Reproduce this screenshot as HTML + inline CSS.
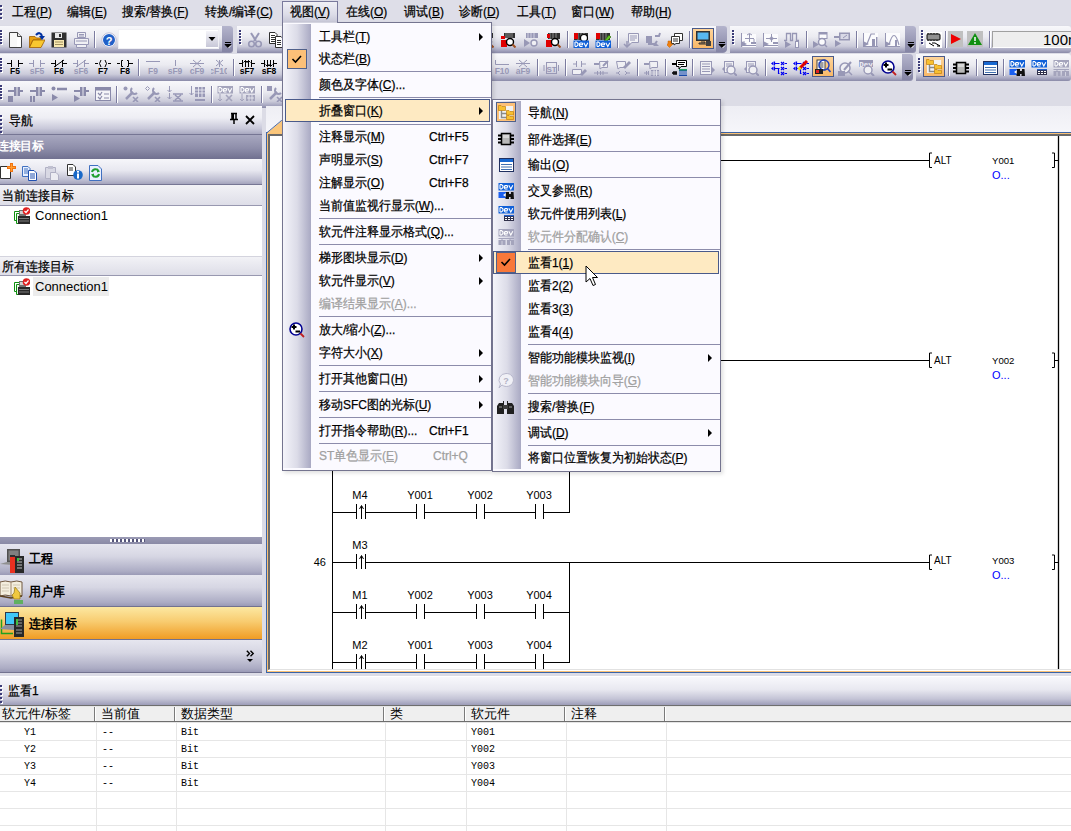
<!DOCTYPE html>
<html><head><meta charset="utf-8">
<style>
*{margin:0;padding:0;box-sizing:border-box}
html,body{width:1071px;height:831px;overflow:hidden;background:#dcdce6;font-family:"Liberation Sans",sans-serif;font-size:12px;color:#000}
.a{position:absolute}
#menubar{left:0;top:0;width:1071px;height:25px;background:#dedee8}
#menubar span{position:absolute;top:3px;font-size:13px;white-space:nowrap;transform:scaleX(0.92);transform-origin:0 0}
.tb{position:absolute;height:27px;background:linear-gradient(#f8f8fb 0%,#ebebf1 40%,#cbcbda 75%,#a6a6c0 90%,#8a8aa8 100%);border-radius:0 3px 3px 0}
#nav{left:0;top:106px;width:262px;height:567px;background:#fff}
#editor{left:266px;top:106px;width:805px;height:567px}
#watch{left:0;top:676px;width:1071px;height:155px;background:#fff}
#menu{left:282px;top:22px;width:210px;height:449px;background:#fbfaff;border:1px solid #74748f;box-shadow:2px 2px 4px rgba(0,0,0,.13)}
#sub{left:492px;top:99px;width:229px;height:373px;background:#fbfaff;border:1px solid #74748f;box-shadow:2px 2px 4px rgba(0,0,0,.13)}
.strip{position:absolute;left:0;top:0;bottom:0;width:28px;background:linear-gradient(90deg,#f4f4fa 0%,#dcdce8 50%,#a9a9c3 100%)}
.mi{position:absolute;height:22px;line-height:22px;font-size:13px;white-space:nowrap;transform:scaleX(0.92);transform-origin:0 0}
.sep{position:absolute;left:36px;right:0;height:1px;background:#8c8cab}
.dis{color:#a0a0a0}
.sc{position:absolute;white-space:nowrap}
.arr{position:absolute;width:0;height:0;border-top:4px solid transparent;border-bottom:4px solid transparent;border-left:4px solid #000}
.btn{left:0;width:262px;height:32px;background:linear-gradient(#e6e6ef 0%,#d6d6e3 40%,#acacc4 88%,#9a9ab6 100%);border-bottom:1px solid #72728f}
.sel{background:linear-gradient(#fce8a2 0%,#f8cc70 45%,#f09c24 100%)}
.bt{font-size:13px;font-weight:bold;transform:scaleX(0.92);transform-origin:0 0}
.mono{font-family:"Liberation Mono",monospace;font-size:10px;line-height:13px;white-space:nowrap}
.mi,#menubar span,.tx{-webkit-text-stroke:0.25px currentColor}
.tx{transform:scaleX(0.92);transform-origin:0 0}
</style></head>
<body>
<div id="menubar" class="a"><div class="a" style="left:0px;top:5px;width:2px;height:2px;background:#3c3c78;box-shadow:1px 1px 0 #fff"></div><div class="a" style="left:0px;top:9px;width:2px;height:2px;background:#3c3c78;box-shadow:1px 1px 0 #fff"></div><div class="a" style="left:0px;top:13px;width:2px;height:2px;background:#3c3c78;box-shadow:1px 1px 0 #fff"></div><div class="a" style="left:0px;top:17px;width:2px;height:2px;background:#3c3c78;box-shadow:1px 1px 0 #fff"></div>
  <span style="left:12px">工程(<u>P</u>)</span>
  <span style="left:67px">编辑(<u>E</u>)</span>
  <span style="left:122px">搜索/替换(<u>F</u>)</span>
  <span style="left:205px">转换/编译(<u>C</u>)</span>
  <div class="a" style="left:282px;top:1px;width:56px;height:22px;background:linear-gradient(#f0f0f5 0%,#dcdce8 60%,#c6c6d6 100%);border:1px solid #7a7a9c;border-bottom:none"></div><span style="left:290px">视图(<u>V</u>)</span>
  <span style="left:346px">在线(<u>O</u>)</span>
  <span style="left:404px">调试(<u>B</u>)</span>
  <span style="left:459px">诊断(<u>D</u>)</span>
  <span style="left:517px">工具(<u>T</u>)</span>
  <span style="left:571px">窗口(<u>W</u>)</span>
  <span style="left:631px">帮助(<u>H</u>)</span>
</div>
<!-- toolbars -->
<div class="tb" style="left:0px;top:26px;width:233px"></div><div class="a" style="left:222px;top:26px;width:11px;height:26px;background:linear-gradient(#b4b4cc,#8484a4);border-radius:0 3px 3px 0"></div><svg class="a" style="left:224px;top:41px" width="8" height="8" viewBox="0 0 8 8"><path d="M1 1.5H7M1 3.5H7L4 6.5Z" stroke="#000" stroke-width="1" fill="#000"/><path d="M4.5 7L7 4.5" stroke="#fff"/></svg><div class="a" style="left:0px;top:30px;width:2px;height:2px;background:#3c3c78;box-shadow:1px 1px 0 #fff"></div><div class="a" style="left:0px;top:33px;width:2px;height:2px;background:#3c3c78;box-shadow:1px 1px 0 #fff"></div><div class="a" style="left:0px;top:36px;width:2px;height:2px;background:#3c3c78;box-shadow:1px 1px 0 #fff"></div><div class="a" style="left:0px;top:39px;width:2px;height:2px;background:#3c3c78;box-shadow:1px 1px 0 #fff"></div><div class="a" style="left:0px;top:42px;width:2px;height:2px;background:#3c3c78;box-shadow:1px 1px 0 #fff"></div><svg class="a" style="left:8px;top:32px" width="16" height="16" viewBox="0 0 16 16"><path d="M1.5 0.5H9.5L13.5 4.5V15.5H1.5Z" fill="#fff" stroke="#404040"/><path d="M9.5 0.5V4.5H13.5" fill="#e8e8e8" stroke="#404040"/><rect x="2" y="1" width="7" height="14" fill="#f8f8f8"/></svg><svg class="a" style="left:29px;top:32px" width="16" height="16" viewBox="0 0 16 16"><path d="M0.5 4.5H6L7.5 6H12V8H4L0.5 15.5Z" fill="#e8a010" stroke="#a06000" stroke-width="0.8"/><path d="M0.5 15.5L4 8H16L12 15.5Z" fill="#f8c830" stroke="#a06000" stroke-width="0.8"/><path d="M7 3Q11 -1 13 4" stroke="#0030a0" stroke-width="2.2" fill="none"/><path d="M10 4H16L13 8Z" fill="#0030a0"/></svg><svg class="a" style="left:51px;top:32px" width="16" height="16" viewBox="0 0 16 16"><rect x="0.5" y="0.5" width="15" height="15" fill="#303030"/><rect x="4" y="1" width="7" height="5" fill="#e8e8e8"/><rect x="8" y="2" width="2" height="3" fill="#303030"/><rect x="3" y="8" width="10" height="7" fill="#f8e8b0"/><path d="M4 10H12M4 12.5H12" stroke="#a09060"/></svg><svg class="a" style="left:73px;top:32px" width="16" height="16" viewBox="0 0 16 16"><path d="M4.5 0.5H12.5V5.5H4.5Z" fill="#f0f0f4" stroke="#9898b6"/><path d="M1.5 6.5H15.5V12.5H1.5Z" fill="#f0f0f4" stroke="#9898b6"/><path d="M3.5 12.5H13.5V15.5H3.5Z" fill="#f0f0f4" stroke="#9898b6"/><path d="M6 2.5H11M6 4H11M3 9H14" stroke="#9898b6"/></svg><div class="a" style="left:94px;top:31px;width:1px;height:17px;background:#7c7ca0;box-shadow:1px 0 0 #fff"></div><svg class="a" style="left:101px;top:32px" width="16" height="16" viewBox="0 0 16 16"><circle cx="8" cy="8" r="7.2" fill="#fff" stroke="#c0c0d8"/><circle cx="8" cy="8" r="6" fill="#2060c8"/><text x="8" y="12.5" font-size="11" font-weight="bold" text-anchor="middle" fill="#fff" font-family="Liberation Sans,sans-serif">?</text></svg><div class="a" style="left:118px;top:29px;width:101px;height:20px;background:#fff;border:1px solid #f0f0f4"></div><div class="a" style="left:206px;top:31px;width:12px;height:16px;background:linear-gradient(#f4f4f8,#c8c8d8)"></div><svg class="a" style="left:208px;top:35px" width="8" height="8" viewBox="0 0 8 8"><path d="M0.5 2H7.5L4 6Z" fill="#000"/></svg><div class="tb" style="left:237px;top:26px;width:489px"></div><div class="a" style="left:716px;top:26px;width:11px;height:26px;background:linear-gradient(#b4b4cc,#8484a4);border-radius:0 3px 3px 0"></div><svg class="a" style="left:718px;top:41px" width="8" height="8" viewBox="0 0 8 8"><path d="M1 1.5H7M1 3.5H7L4 6.5Z" stroke="#000" stroke-width="1" fill="#000"/><path d="M4.5 7L7 4.5" stroke="#fff"/></svg><div class="a" style="left:239px;top:30px;width:2px;height:2px;background:#3c3c78;box-shadow:1px 1px 0 #fff"></div><div class="a" style="left:239px;top:33px;width:2px;height:2px;background:#3c3c78;box-shadow:1px 1px 0 #fff"></div><div class="a" style="left:239px;top:36px;width:2px;height:2px;background:#3c3c78;box-shadow:1px 1px 0 #fff"></div><div class="a" style="left:239px;top:39px;width:2px;height:2px;background:#3c3c78;box-shadow:1px 1px 0 #fff"></div><div class="a" style="left:239px;top:42px;width:2px;height:2px;background:#3c3c78;box-shadow:1px 1px 0 #fff"></div><svg class="a" style="left:247px;top:32px" width="16" height="16" viewBox="0 0 16 16"><path d="M4 1L9 9M12 1L7 9" stroke="#9898b6" stroke-width="2"/><circle cx="4.5" cy="12" r="2.8" fill="none" stroke="#9898b6" stroke-width="1.6"/><circle cx="11.5" cy="12" r="2.8" fill="none" stroke="#9898b6" stroke-width="1.6"/></svg><svg class="a" style="left:269px;top:32px" width="16" height="16" viewBox="0 0 16 16"><path d="M0.5 0.5H6L8 2.5V11.5H0.5Z" fill="#fff" stroke="#303030"/><path d="M2 3.5H6M2 5.5H6M2 7.5H6M2 9.5H6" stroke="#303030"/><path d="M6.5 4.5H12L14 6.5V15.5H6.5Z" fill="#fff" stroke="#303030"/><path d="M8 8.5H12M8 10.5H12M8 12.5H12" stroke="#303030"/></svg><svg class="a" style="left:478px;top:32px" width="16" height="16" viewBox="0 0 16 16"><rect x="4" y="1" width="11" height="5" fill="#303030"/><path d="M6 1V6M8 1V6M10 1V6M12 1V6" stroke="#888"/><rect x="1" y="4" width="4" height="3" fill="#e00000"/><rect x="1" y="8" width="6" height="7" fill="#e00000"/><circle cx="10" cy="10" r="3.5" fill="#fff" stroke="#000" stroke-width="1.4"/><path d="M12.5 12.5L15.5 15.5" stroke="#a05020" stroke-width="2"/></svg><svg class="a" style="left:500px;top:32px" width="16" height="16" viewBox="0 0 16 16"><rect x="4" y="1" width="11" height="5" fill="#303030"/><path d="M6 1V6M8 1V6M10 1V6M12 1V6" stroke="#888"/><rect x="1" y="4" width="4" height="3" fill="#e00000"/><rect x="1" y="8" width="6" height="7" fill="#e00000"/><circle cx="10" cy="10" r="3.5" fill="#fff" stroke="#000" stroke-width="1.4"/><path d="M12.5 12.5L15.5 15.5" stroke="#a05020" stroke-width="2"/></svg><svg class="a" style="left:523px;top:32px" width="16" height="16" viewBox="0 0 16 16"><rect x="3" y="1" width="12" height="5" fill="#9898b6"/><path d="M5 1V6M8 1V6M11 1V6" stroke="#d0d0e0"/><path d="M1 7L7 11L1 15Z" fill="#9898b6"/><circle cx="11" cy="11" r="3" fill="#f0f0f4" stroke="#9898b6" stroke-width="1.4"/></svg><svg class="a" style="left:545px;top:32px" width="16" height="16" viewBox="0 0 16 16"><rect x="3" y="1" width="12" height="6" fill="#303030"/><path d="M5 1V7M8 1V7M11 1V7" stroke="#888"/><rect x="2" y="2" width="3" height="4" fill="#e00000"/><rect x="1" y="8" width="6" height="7" fill="#e00000"/><circle cx="10" cy="10" r="3.5" fill="#fff" stroke="#000" stroke-width="1.4"/><path d="M12.5 12.5L15.5 15.5" stroke="#a05020" stroke-width="2"/></svg><div class="a" style="left:567px;top:31px;width:1px;height:17px;background:#7c7ca0;box-shadow:1px 0 0 #fff"></div><svg class="a" style="left:573px;top:32px" width="16" height="16" viewBox="0 0 16 16"><rect x="1" y="1" width="14" height="7" fill="#303030"/><path d="M5 1V8M8 1V8M11 1V8" stroke="#888"/><rect x="1" y="1" width="4" height="6" fill="#e00000"/><circle cx="11" cy="6" r="3.5" fill="#fff" stroke="#000" stroke-width="1.2"/><rect x="0.5" y="8.5" width="15.5" height="7.5" fill="#1060d8"/><g transform="translate(0,8.5)"><path d="M2 1.5V6M2 1.5H3.5L5 3V4.5L3.5 6H2M6.5 4.2H9.5V3.2L9 2.5H7.2L6.5 3.2V5.3L7.2 6H9.5M10.8 2.3L12.8 6L14.8 2.3" stroke="#fff" stroke-width="1.1" fill="none"/></g></svg><svg class="a" style="left:595px;top:32px" width="16" height="16" viewBox="0 0 16 16"><rect x="1" y="1" width="14" height="7" fill="#303030"/><path d="M5 1V8M8 1V8M11 1V8" stroke="#888"/><rect x="1" y="1" width="4" height="6" fill="#e00000"/><path d="M9 9L14 3L16 5L11 10Z" fill="#60c020" stroke="#206000" stroke-width="0.6"/><rect x="0.5" y="8.5" width="15.5" height="7.5" fill="#1060d8"/><g transform="translate(0,8.5)"><path d="M2 1.5V6M2 1.5H3.5L5 3V4.5L3.5 6H2M6.5 4.2H9.5V3.2L9 2.5H7.2L6.5 3.2V5.3L7.2 6H9.5M10.8 2.3L12.8 6L14.8 2.3" stroke="#fff" stroke-width="1.1" fill="none"/></g></svg><div class="a" style="left:617px;top:31px;width:1px;height:17px;background:#7c7ca0;box-shadow:1px 0 0 #fff"></div><svg class="a" style="left:623px;top:32px" width="16" height="16" viewBox="0 0 16 16"><path d="M5.5 1.5H15.5V10.5H9L6 13V10.5H5.5Z" fill="#f2f2f6" stroke="#9898b6"/><path d="M7 4H14M7 6H14M7 8H12" stroke="#9898b6"/><path d="M4 9V14M1 12L4 15L7 12" stroke="#9898b6" fill="none" stroke-width="1.5"/></svg><svg class="a" style="left:645px;top:32px" width="16" height="16" viewBox="0 0 16 16"><rect x="1" y="4" width="6" height="7" fill="#9898b6"/><path d="M3 12H10L12 9M10 4L14 4L15 1" stroke="#9898b6" stroke-width="2" fill="none"/><path d="M8 14L11 11L14 14" fill="#9898b6"/></svg><svg class="a" style="left:667px;top:32px" width="16" height="16" viewBox="0 0 16 16"><path d="M7.5 1.5H15.5V8.5H12L10 10V8.5H7.5Z" fill="#fff" stroke="#303030"/><path d="M4.5 4.5H12.5V11.5H9L7 13V11.5H4.5Z" fill="#fff" stroke="#303030"/><path d="M6 7H11M6 9H11" stroke="#303030"/><path d="M1 9H4V12H6L2.5 15.5L-1 12H1Z" fill="#f08010" stroke="#c06000" stroke-width="0.5"/></svg><div class="a" style="left:689px;top:31px;width:1px;height:17px;background:#7c7ca0;box-shadow:1px 0 0 #fff"></div><div class="a" style="left:692px;top:28px;width:22px;height:21px;background:linear-gradient(#fdd49a,#f8b868);border:1px solid #4a5a8a"></div><svg class="a" style="left:695px;top:30px" width="16" height="16" viewBox="0 0 16 16"><rect x="1" y="1" width="14" height="10" fill="#303030"/><rect x="2.5" y="2.5" width="11" height="7" fill="#58b8f0"/><path d="M6 12H10V13H4V14H12" stroke="#303030" fill="none"/><rect x="11" y="11" width="5" height="5" fill="#404040"/></svg><div class="tb" style="left:730px;top:26px;width:186px"></div><div class="a" style="left:905px;top:26px;width:11px;height:26px;background:linear-gradient(#b4b4cc,#8484a4);border-radius:0 3px 3px 0"></div><svg class="a" style="left:907px;top:41px" width="8" height="8" viewBox="0 0 8 8"><path d="M1 1.5H7M1 3.5H7L4 6.5Z" stroke="#000" stroke-width="1" fill="#000"/><path d="M4.5 7L7 4.5" stroke="#fff"/></svg><div class="a" style="left:732px;top:30px;width:2px;height:2px;background:#3c3c78;box-shadow:1px 1px 0 #fff"></div><div class="a" style="left:732px;top:33px;width:2px;height:2px;background:#3c3c78;box-shadow:1px 1px 0 #fff"></div><div class="a" style="left:732px;top:36px;width:2px;height:2px;background:#3c3c78;box-shadow:1px 1px 0 #fff"></div><div class="a" style="left:732px;top:39px;width:2px;height:2px;background:#3c3c78;box-shadow:1px 1px 0 #fff"></div><div class="a" style="left:732px;top:42px;width:2px;height:2px;background:#3c3c78;box-shadow:1px 1px 0 #fff"></div><svg class="a" style="left:740px;top:32px" width="16" height="16" viewBox="0 0 16 16"><rect x="2" y="2" width="14" height="13" fill="#fbfbfd"/><path d="M1.5 1V15M1 13.5H16" stroke="#9696b4"/><path d="M1 9L7 12L1 15Z" fill="#9696b4"/><path d="M5 6.5H14M9.5 2V10M7 3Q9.5 0 12 3" stroke="#9696b4" fill="none"/><rect x="11" y="10" width="5" height="2" fill="#9696b4"/><path d="M4 9V12M14 7V10" stroke="#9696b4"/></svg><svg class="a" style="left:762px;top:32px" width="16" height="16" viewBox="0 0 16 16"><rect x="2" y="2" width="14" height="13" fill="#fbfbfd"/><path d="M1.5 1V15M1 13.5H16" stroke="#9696b4"/><path d="M1 9L7 12L1 15Z" fill="#9696b4"/><path d="M4 6.5H15M9.5 2V10" stroke="#9696b4"/><circle cx="9.5" cy="6.5" r="1.5" fill="none" stroke="#9696b4"/><rect x="11" y="10" width="5" height="2" fill="#9696b4"/></svg><svg class="a" style="left:784px;top:32px" width="16" height="16" viewBox="0 0 16 16"><path d="M0 8.5H2.5V1.5H6.5V8.5H8.5V1.5H12.5V8.5H15" stroke="#9696b4" fill="none" stroke-width="1.3"/><path d="M1 9L7 12.5L1 16Z" fill="#9696b4"/><rect x="11.5" y="9.5" width="3" height="6" stroke="#9696b4" fill="#fbfbfd"/></svg><div class="a" style="left:806px;top:31px;width:1px;height:17px;background:#7c7ca0;box-shadow:1px 0 0 #fff"></div><svg class="a" style="left:812px;top:32px" width="16" height="16" viewBox="0 0 16 16"><rect x="7" y="0.5" width="8" height="6" fill="#fbfbfd" stroke="#9696b4"/><rect x="7" y="0.5" width="8" height="2" fill="#9696b4"/><path d="M1 9L7 12.5L1 16Z" fill="#9696b4"/><circle cx="10" cy="10" r="3.5" fill="#fbfbfd" stroke="#9696b4" stroke-width="1.5"/><path d="M12.5 12.5L15 15" stroke="#9696b4" stroke-width="1.5"/></svg><svg class="a" style="left:834px;top:32px" width="16" height="16" viewBox="0 0 16 16"><path d="M0 5H6" stroke="#9696b4" stroke-width="2"/><path d="M1 8L7 11.5L1 15Z" fill="#9696b4"/><rect x="5" y="0.5" width="11" height="8" fill="#9696b4"/><rect x="6.5" y="2" width="8" height="5" fill="#d8d8e6"/><path d="M9 6L13 3" stroke="#9696b4"/></svg><div class="a" style="left:856px;top:31px;width:1px;height:17px;background:#7c7ca0;box-shadow:1px 0 0 #fff"></div><svg class="a" style="left:862px;top:32px" width="16" height="16" viewBox="0 0 16 16"><rect x="2" y="1" width="14" height="14" fill="#fbfbfd"/><path d="M1.5 1V15M1 14.5H16" stroke="#9696b4"/><path d="M1 9L7 12L1 15Z" fill="#9696b4"/><path d="M5 12L9 2H13" stroke="#9696b4" fill="none" stroke-width="1.2"/><rect x="10" y="7" width="3" height="7" fill="#9696b4"/><rect x="14" y="5" width="1.5" height="9" fill="#9696b4"/></svg><svg class="a" style="left:884px;top:32px" width="16" height="16" viewBox="0 0 16 16"><rect x="2" y="1" width="14" height="14" fill="#fbfbfd"/><path d="M1.5 1V15M1 14.5H16" stroke="#9696b4"/><path d="M1 9L7 12L1 15Z" fill="#9696b4"/><path d="M5 13Q10 -6 15 13" stroke="#9696b4" fill="none" stroke-width="1.2"/><rect x="11" y="8" width="2" height="6" fill="#9696b4"/></svg><div class="tb" style="left:919px;top:26px;width:152px"></div><div class="a" style="left:921px;top:30px;width:2px;height:2px;background:#3c3c78;box-shadow:1px 1px 0 #fff"></div><div class="a" style="left:921px;top:33px;width:2px;height:2px;background:#3c3c78;box-shadow:1px 1px 0 #fff"></div><div class="a" style="left:921px;top:36px;width:2px;height:2px;background:#3c3c78;box-shadow:1px 1px 0 #fff"></div><div class="a" style="left:921px;top:39px;width:2px;height:2px;background:#3c3c78;box-shadow:1px 1px 0 #fff"></div><div class="a" style="left:921px;top:42px;width:2px;height:2px;background:#3c3c78;box-shadow:1px 1px 0 #fff"></div><svg class="a" style="left:926px;top:32px" width="16" height="16" viewBox="0 0 16 16"><rect x="0" y="0" width="16" height="16" fill="#fff"/><rect x="1" y="2" width="13" height="6" rx="1" fill="#909090" stroke="#000"/><path d="M2 1V2M5 1V2M8 1V2M11 1V2M2 8V9M5 8V9M8 8V9M11 8V9" stroke="#000"/><path d="M3 11L8 14M6 11H9L14 14H11" stroke="#000" fill="none"/></svg><div class="a" style="left:945px;top:31px;width:1px;height:17px;background:#7c7ca0;box-shadow:1px 0 0 #fff"></div><div class="a" style="left:948px;top:31px;width:15px;height:16px;background:#c0c0c0"></div><svg class="a" style="left:949px;top:32px" width="14" height="14" viewBox="0 0 14 14"><path d="M2 2L12 7L2 12Z" fill="#f00000"/></svg><div class="a" style="left:967px;top:31px;width:16px;height:16px;background:#c0c0c0"></div><svg class="a" style="left:967px;top:32px" width="16" height="14" viewBox="0 0 16 14"><path d="M8 1L15 13H1Z" fill="#109010"/><path d="M8 5V9" stroke="#fff" stroke-width="1.5"/><circle cx="8" cy="11" r="0.9" fill="#fff"/></svg><div class="a" style="left:989px;top:31px;width:1px;height:17px;background:#7c7ca0;box-shadow:1px 0 0 #fff"></div><div class="a" style="left:992px;top:31px;width:85px;height:17px;background:#eeeeee;border:1px solid #a0a0a0;border-right:none;border-bottom-color:#fff"></div><div class="a" style="left:1043px;top:30px;font-size:15px;line-height:19px;white-space:nowrap">100ms</div><div class="tb" style="left:0px;top:54px;width:913px"></div><div class="a" style="left:902px;top:54px;width:11px;height:26px;background:linear-gradient(#b4b4cc,#8484a4);border-radius:0 3px 3px 0"></div><svg class="a" style="left:904px;top:69px" width="8" height="8" viewBox="0 0 8 8"><path d="M1 1.5H7M1 3.5H7L4 6.5Z" stroke="#000" stroke-width="1" fill="#000"/><path d="M4.5 7L7 4.5" stroke="#fff"/></svg><div class="a" style="left:0px;top:58px;width:2px;height:2px;background:#3c3c78;box-shadow:1px 1px 0 #fff"></div><div class="a" style="left:0px;top:61px;width:2px;height:2px;background:#3c3c78;box-shadow:1px 1px 0 #fff"></div><div class="a" style="left:0px;top:64px;width:2px;height:2px;background:#3c3c78;box-shadow:1px 1px 0 #fff"></div><div class="a" style="left:0px;top:67px;width:2px;height:2px;background:#3c3c78;box-shadow:1px 1px 0 #fff"></div><div class="a" style="left:0px;top:70px;width:2px;height:2px;background:#3c3c78;box-shadow:1px 1px 0 #fff"></div><svg class="a" style="left:7px;top:59px" width="16" height="17" viewBox="0 0 16 17"><g transform="translate(0,1)"><path d="M0 3.5H4M4.5 0V7M11.5 0V7M12 3.5H16" stroke="#000" fill="none"/></g><text x="8" y="15" font-size="8.5" font-weight="bold" text-anchor="middle" fill="#000" font-family="Liberation Sans,sans-serif">F5</text></svg><svg class="a" style="left:29px;top:59px" width="16" height="17" viewBox="0 0 16 17"><g transform="translate(0,1)"><path d="M0 3.5H4M4.5 0V7M11.5 0V7M12 3.5H16" stroke="#9898b6" fill="none"/></g><text x="8" y="15" font-size="8.5" font-weight="bold" text-anchor="middle" fill="#9898b6" font-family="Liberation Sans,sans-serif">sF5</text></svg><svg class="a" style="left:51px;top:59px" width="16" height="17" viewBox="0 0 16 17"><g transform="translate(0,1)"><path d="M0 3.5H4M4.5 0V7M11.5 0V7M12 3.5H16M3 7L13 0" stroke="#000" fill="none"/></g><text x="8" y="15" font-size="8.5" font-weight="bold" text-anchor="middle" fill="#000" font-family="Liberation Sans,sans-serif">F6</text></svg><svg class="a" style="left:73px;top:59px" width="16" height="17" viewBox="0 0 16 17"><g transform="translate(0,1)"><path d="M0 3.5H4M4.5 0V7M11.5 0V7M12 3.5H16M3 7L13 0" stroke="#9898b6" fill="none"/></g><text x="8" y="15" font-size="8.5" font-weight="bold" text-anchor="middle" fill="#9898b6" font-family="Liberation Sans,sans-serif">sF6</text></svg><svg class="a" style="left:95px;top:59px" width="16" height="17" viewBox="0 0 16 17"><g transform="translate(0,1)"><path d="M0 3.5H3M6 0Q3 3.5 6 7M10 0Q13 3.5 10 7M13 3.5H16" stroke="#000" fill="none"/></g><text x="8" y="15" font-size="8.5" font-weight="bold" text-anchor="middle" fill="#000" font-family="Liberation Sans,sans-serif">F7</text></svg><svg class="a" style="left:117px;top:59px" width="16" height="17" viewBox="0 0 16 17"><g transform="translate(0,1)"><path d="M0 3.5H3M6 0.5H4.5V6.5H6M10 0.5H11.5V6.5H10M12 3.5H16" stroke="#000" fill="none"/></g><text x="8" y="15" font-size="8.5" font-weight="bold" text-anchor="middle" fill="#000" font-family="Liberation Sans,sans-serif">F8</text></svg><div class="a" style="left:138px;top:59px;width:1px;height:17px;background:#7c7ca0;box-shadow:1px 0 0 #fff"></div><svg class="a" style="left:145px;top:59px" width="16" height="17" viewBox="0 0 16 17"><g transform="translate(0,1)"><path d="M1 1.5H15" stroke="#9898b6" fill="none"/></g><text x="8" y="15" font-size="8.5" font-weight="bold" text-anchor="middle" fill="#9898b6" font-family="Liberation Sans,sans-serif">F9</text></svg><svg class="a" style="left:167px;top:59px" width="16" height="17" viewBox="0 0 16 17"><g transform="translate(0,1)"><path d="M8.5 0V6" stroke="#9898b6" fill="none"/></g><text x="8" y="15" font-size="8.5" font-weight="bold" text-anchor="middle" fill="#9898b6" font-family="Liberation Sans,sans-serif">sF9</text></svg><svg class="a" style="left:189px;top:59px" width="16" height="17" viewBox="0 0 16 17"><g transform="translate(0,1)"><path d="M1 3.5H15M4 0L12 7M12 0L4 7" stroke="#9898b6" fill="none"/></g><text x="8" y="15" font-size="8.5" font-weight="bold" text-anchor="middle" fill="#9898b6" font-family="Liberation Sans,sans-serif">cF9</text></svg><svg class="a" style="left:211px;top:59px" width="16" height="17" viewBox="0 0 16 17"><g transform="translate(0,1)"><path d="M8.5 0V7M5 0L12 6M12 0L5 6" stroke="#9898b6" fill="none"/></g><text x="8" y="15" font-size="8.5" font-weight="bold" text-anchor="middle" fill="#9898b6" font-family="Liberation Sans,sans-serif">cF10</text></svg><div class="a" style="left:233px;top:59px;width:1px;height:17px;background:#7c7ca0;box-shadow:1px 0 0 #fff"></div><svg class="a" style="left:239px;top:59px" width="16" height="17" viewBox="0 0 16 17"><g transform="translate(0,1)"><path d="M0 3.5H3M3.5 0V7M12.5 0V7M13 3.5H16M6.5 7V0.5M4.5 2.5L6.5 0.5L8.5 2.5M9.5 7V0.5M7.5 2.5L9.5 0.5L11.5 2.5" stroke="#000" fill="none"/></g><text x="8" y="15" font-size="8.5" font-weight="bold" text-anchor="middle" fill="#000" font-family="Liberation Sans,sans-serif">sF7</text></svg><svg class="a" style="left:261px;top:59px" width="16" height="17" viewBox="0 0 16 17"><g transform="translate(0,1)"><path d="M0 3.5H3M3.5 0V7M12.5 0V7M13 3.5H16M6.5 0V6.5M4.5 4.5L6.5 6.5L8.5 4.5M9.5 0V6.5M7.5 4.5L9.5 6.5L11.5 4.5" stroke="#000" fill="none"/></g><text x="8" y="15" font-size="8.5" font-weight="bold" text-anchor="middle" fill="#000" font-family="Liberation Sans,sans-serif">sF8</text></svg><svg class="a" style="left:494px;top:59px" width="16" height="17" viewBox="0 0 16 17"><g transform="translate(0,1)"><path d="M1.5 0V4.5H15" stroke="#9898b6" fill="none"/></g><text x="8" y="15" font-size="8.5" font-weight="bold" text-anchor="middle" fill="#9898b6" font-family="Liberation Sans,sans-serif">F10</text></svg><svg class="a" style="left:515px;top:59px" width="16" height="17" viewBox="0 0 16 17"><g transform="translate(0,1)"><path d="M1 3.5H15M4 0L12 7M12 0L4 7" stroke="#9898b6" fill="none"/></g><text x="8" y="15" font-size="8.5" font-weight="bold" text-anchor="middle" fill="#9898b6" font-family="Liberation Sans,sans-serif">aF9</text></svg><div class="a" style="left:537px;top:59px;width:1px;height:17px;background:#7c7ca0;box-shadow:1px 0 0 #fff"></div><svg class="a" style="left:543px;top:60px" width="16" height="16" viewBox="0 0 16 16"><rect x="3.5" y="2.5" width="10" height="11" fill="none" stroke="#9898b6"/><path d="M1 5V11M15.5 5V11" stroke="#9898b6"/><text x="8.5" y="11.5" font-size="8" font-weight="bold" text-anchor="middle" fill="#9898b6" font-family="Liberation Sans,sans-serif">ST</text></svg><div class="a" style="left:565px;top:59px;width:1px;height:17px;background:#7c7ca0;box-shadow:1px 0 0 #fff"></div><svg class="a" style="left:571px;top:60px" width="16" height="16" viewBox="0 0 16 16"><path d="M2 4H6M5.5 1V7M10.5 1V7M10 4H15" stroke="#9898b6" fill="none"/><path d="M1.5 9.5H10.5V14.5H1.5Z" fill="#f0f0f4" stroke="#9898b6"/><path d="M9 14L14 9L16 11L11 16Z" fill="#9898b6"/></svg><svg class="a" style="left:593px;top:60px" width="16" height="16" viewBox="0 0 16 16"><rect x="1" y="3" width="5" height="2" fill="#9898b6"/><path d="M6.5 1.5H14.5V7.5H9L7 9Z" fill="#f0f0f4" stroke="#9898b6"/><path d="M10 6L15 1" stroke="#9898b6" stroke-width="2"/><path d="M1 13H15M4.5 11V15M7.5 11V15M10 11V15" stroke="#9898b6"/></svg><svg class="a" style="left:615px;top:60px" width="16" height="16" viewBox="0 0 16 16"><path d="M1.5 1.5H10.5V7.5H5L3 9Z" fill="#f0f0f4" stroke="#9898b6"/><path d="M8 7L14 1L16 3L10 9Z" fill="#9898b6"/><path d="M1 13H4M5 11L3 13L5 15M10 11L12 13L10 15M12 13H15" stroke="#9898b6" fill="none"/></svg><div class="a" style="left:637px;top:59px;width:1px;height:17px;background:#7c7ca0;box-shadow:1px 0 0 #fff"></div><svg class="a" style="left:643px;top:60px" width="16" height="16" viewBox="0 0 16 16"><rect x="1" y="3" width="5" height="2" fill="#9898b6"/><path d="M6.5 1.5H14.5V7.5H9L7 9Z" fill="#f0f0f4" stroke="#9898b6"/><path d="M1 13H6M3.5 11V15M5.5 11V15" stroke="#9898b6"/><rect x="8" y="10" width="8" height="6" fill="#9898b6"/><path d="M8 12H16M8 14H16M11 10V16M13.5 10V16" stroke="#f0f0f4" stroke-width="0.8"/></svg><div class="a" style="left:665px;top:59px;width:1px;height:17px;background:#7c7ca0;box-shadow:1px 0 0 #fff"></div><svg class="a" style="left:671px;top:60px" width="16" height="16" viewBox="0 0 16 16"><rect x="1" y="3" width="4" height="2" fill="#000"/><path d="M5.5 0.5H15.5V6.5H10L8 9V6.5H5.5Z" fill="#fff" stroke="#000"/><path d="M7 2.5H14M7 4.5H13" stroke="#000"/><path d="M1 13H6M3 11V15M5 11V15" stroke="#000" stroke-width="1.4"/><rect x="8" y="10" width="8" height="6" fill="#1848a8"/><path d="M8 12H16M8 14H16" stroke="#fff" stroke-width="0.8"/><rect x="8" y="9" width="8" height="1.5" fill="#20a060"/></svg><div class="a" style="left:692px;top:59px;width:1px;height:17px;background:#7c7ca0;box-shadow:1px 0 0 #fff"></div><svg class="a" style="left:699px;top:60px" width="16" height="16" viewBox="0 0 16 16"><rect x="1.5" y="1.5" width="11" height="13" fill="#f0f0f4" stroke="#9898b6"/><path d="M3 4H11M3 6.5H11M3 9H11M3 11.5H11" stroke="#9898b6"/><path d="M13 7L16 10L13 13Z" fill="#9898b6"/></svg><svg class="a" style="left:721px;top:60px" width="16" height="16" viewBox="0 0 16 16"><rect x="3.5" y="1.5" width="9" height="11" fill="#f0f0f4" stroke="#9898b6"/><path d="M5 4H11M5 6H11" stroke="#9898b6"/><circle cx="10" cy="10" r="4" fill="#f0f0f4" stroke="#9898b6" stroke-width="1.4"/><path d="M13 13L16 16" stroke="#9898b6" stroke-width="2"/><path d="M1 9L4 6V12Z" fill="#9898b6"/></svg><svg class="a" style="left:743px;top:60px" width="16" height="16" viewBox="0 0 16 16"><rect x="3.5" y="1.5" width="9" height="11" fill="#f0f0f4" stroke="#9898b6"/><path d="M5 4H11M5 6H11" stroke="#9898b6"/><circle cx="10" cy="10" r="4" fill="#f0f0f4" stroke="#9898b6" stroke-width="1.4"/><path d="M13 13L16 16" stroke="#9898b6" stroke-width="2"/><path d="M1 9L4 6V12Z" fill="#9898b6"/></svg><div class="a" style="left:765px;top:59px;width:1px;height:17px;background:#7c7ca0;box-shadow:1px 0 0 #fff"></div><svg class="a" style="left:771px;top:60px" width="16" height="16" viewBox="0 0 16 16"><path d="M0 3.5L2.5 1.5V5.5Z" fill="#0000f0"/><path d="M3.5 1.5V5.5M3.5 3.5H8.5M10 2.0L11.5 3.5L10 5.0M13 2.0L11.5 3.5L13 5.0M13.5 3.5H16" stroke="#0000f0" fill="none" stroke-width="1.2"/><path d="M0 8.5L2.5 6.5V10.5Z" fill="#0000f0"/><path d="M3.5 6.5V10.5M3.5 8.5H8.5M10 7.0L11.5 8.5L10 10.0M13 7.0L11.5 8.5L13 10.0M13.5 8.5H16" stroke="#0000f0" fill="none" stroke-width="1.2"/><path d="M7.5 8.5V13.5H8.5M10 12L11.5 13.5L10 15M13 12L11.5 13.5L13 15M13.5 13.5H16" stroke="#0000f0" fill="none" stroke-width="1.2"/></svg><svg class="a" style="left:793px;top:60px" width="16" height="16" viewBox="0 0 16 16"><path d="M0 3.5L2.5 1.5V5.5Z" fill="#0000f0"/><path d="M3.5 1.5V5.5M3.5 3.5H8.5M10 2.0L11.5 3.5L10 5.0M13 2.0L11.5 3.5L13 5.0M13.5 3.5H16" stroke="#0000f0" fill="none" stroke-width="1.2"/><path d="M0 8.5L2.5 6.5V10.5Z" fill="#0000f0"/><path d="M3.5 6.5V10.5M3.5 8.5H8.5M10 7.0L11.5 8.5L10 10.0M13 7.0L11.5 8.5L13 10.0M13.5 8.5H16" stroke="#0000f0" fill="none" stroke-width="1.2"/><path d="M7.5 8.5V13.5H8.5M10 12L11.5 13.5L10 15M13 12L11.5 13.5L13 15M13.5 13.5H16" stroke="#0000f0" fill="none" stroke-width="1.2"/><path d="M7 8L14 1" stroke="#e00000" stroke-width="3"/><path d="M5.5 9.5L7.5 7.5" stroke="#f0e000" stroke-width="3"/></svg><div class="a" style="left:812px;top:56px;width:22px;height:21px;background:linear-gradient(#fdd49a,#f8b868);border:1px solid #4a5a8a"></div><svg class="a" style="left:815px;top:58px" width="16" height="16" viewBox="0 0 16 16"><rect x="2" y="2" width="8" height="10" fill="#fff" stroke="#404040"/><path d="M3.5 5H8.5M3.5 7H8.5M3.5 9H8.5" stroke="#404040"/><circle cx="9" cy="7" r="5" fill="none" stroke="#2040c0" stroke-width="1.4"/><path d="M12.5 10.5L15.5 14" stroke="#2040c0" stroke-width="1.6"/><rect x="0" y="11" width="8" height="5" fill="#202020"/><rect x="1" y="12" width="3" height="3" fill="#e02020"/></svg><svg class="a" style="left:837px;top:60px" width="16" height="16" viewBox="0 0 16 16"><circle cx="8" cy="8" r="5" fill="#f0f0f4" stroke="#9898b6" stroke-width="1.5"/><path d="M7 10L14 2" stroke="#9898b6" stroke-width="2"/><rect x="1" y="11" width="7" height="5" fill="#9898b6"/><path d="M11 11L15 15" stroke="#9898b6" stroke-width="1.5"/></svg><svg class="a" style="left:859px;top:60px" width="16" height="16" viewBox="0 0 16 16"><rect x="0" y="0" width="14" height="7" fill="#9898b6"/><text x="7" y="6.5" font-size="7.5" font-weight="bold" text-anchor="middle" fill="#f0f0f6" font-family="Liberation Mono,monospace">Dev</text><circle cx="9" cy="10" r="4" fill="#f0f0f4" stroke="#9898b6" stroke-width="1.4"/><path d="M12 13L15 16" stroke="#9898b6" stroke-width="2"/></svg><svg class="a" style="left:881px;top:60px" width="16" height="16" viewBox="0 0 16 16"><circle cx="7" cy="7" r="6" stroke="#000090" stroke-width="1.6" fill="#fff"/><path d="M2.5 5H7.5M5 2.5V7.5M6.5 9.5H11" stroke="#000" stroke-width="2"/><path d="M11.5 11.5L15 15" stroke="#c02020" stroke-width="1.8"/></svg><div class="tb" style="left:916px;top:54px;width:155px"></div><div class="a" style="left:918px;top:58px;width:2px;height:2px;background:#3c3c78;box-shadow:1px 1px 0 #fff"></div><div class="a" style="left:918px;top:61px;width:2px;height:2px;background:#3c3c78;box-shadow:1px 1px 0 #fff"></div><div class="a" style="left:918px;top:64px;width:2px;height:2px;background:#3c3c78;box-shadow:1px 1px 0 #fff"></div><div class="a" style="left:918px;top:67px;width:2px;height:2px;background:#3c3c78;box-shadow:1px 1px 0 #fff"></div><div class="a" style="left:918px;top:70px;width:2px;height:2px;background:#3c3c78;box-shadow:1px 1px 0 #fff"></div><div class="a" style="left:923px;top:56px;width:22px;height:21px;background:linear-gradient(#fdd49a,#f8b868);border:1px solid #4a5a8a"></div><svg class="a" style="left:926px;top:58px" width="16" height="16" viewBox="0 0 16 16"><rect x="1" y="2" width="14" height="13" fill="#f2f2f2"/><path d="M3.5 6V13.5H9M3.5 9.5H9" stroke="#8a8a8a" stroke-width="1.4" fill="none"/><path d="M0.5 1.5H3L4 2.5H7.5V6.5H0.5Z" fill="#f8c030" stroke="#c08010" stroke-width="0.7"/><path d="M8.5 6.5H11L12 7.5H15.5V11H8.5Z" fill="#f8c030" stroke="#c08010" stroke-width="0.7"/><path d="M8.5 11.5H11L12 12.5H15.5V15.5H8.5Z" fill="#f8c030" stroke="#c08010" stroke-width="0.7"/></svg><div class="a" style="left:948px;top:59px;width:1px;height:17px;background:#7c7ca0;box-shadow:1px 0 0 #fff"></div><svg class="a" style="left:953px;top:60px" width="16" height="16" viewBox="0 0 16 16"><path d="M0 4.5H4M0 8H4M0 11.5H4M12 4.5H16M12 8H16M12 11.5H16" stroke="#000" stroke-width="2"/><rect x="3.5" y="2.5" width="9" height="11" fill="#b8b8b8" stroke="#000" stroke-width="1.5"/><rect x="5" y="4" width="6" height="3" fill="#d8d8d8"/></svg><div class="a" style="left:976px;top:59px;width:1px;height:17px;background:#7c7ca0;box-shadow:1px 0 0 #fff"></div><svg class="a" style="left:982px;top:60px" width="16" height="16" viewBox="0 0 16 16"><rect x="1.5" y="1.5" width="14" height="13" fill="#fff" stroke="#203060"/><rect x="2" y="2" width="13" height="3" fill="#1868d0"/><path d="M3 7.5H14M3 10H14M3 12.5H14" stroke="#4070b0"/></svg><div class="a" style="left:1003px;top:59px;width:1px;height:17px;background:#7c7ca0;box-shadow:1px 0 0 #fff"></div><svg class="a" style="left:1009px;top:60px" width="16" height="16" viewBox="0 0 16 16"><rect x="0.5" y="0" width="15.5" height="7.5" fill="#1060d8"/><path d="M2 1.5V6M2 1.5H3.5L5 3V4.5L3.5 6H2M6.5 4.2H9.5V3.2L9 2.5H7.2L6.5 3.2V5.3L7.2 6H9.5M10.8 2.3L12.8 6L14.8 2.3" stroke="#fff" stroke-width="1.1" fill="none"/><rect x="0.5" y="9" width="8" height="6" fill="#1a5ff0"/><path d="M5 12L8 10V14Z" fill="#fff"/><path d="M8 9H11V16H7.5ZM13 9H15.5L16 16H12.5Z" fill="#111"/><rect x="10" y="11" width="3.5" height="3" fill="#111"/></svg><svg class="a" style="left:1031px;top:60px" width="16" height="16" viewBox="0 0 16 16"><rect x="0.5" y="0" width="15.5" height="7.5" fill="#1060d8"/><path d="M2 1.5V6M2 1.5H3.5L5 3V4.5L3.5 6H2M6.5 4.2H9.5V3.2L9 2.5H7.2L6.5 3.2V5.3L7.2 6H9.5M10.8 2.3L12.8 6L14.8 2.3" stroke="#fff" stroke-width="1.1" fill="none"/><rect x="6" y="9" width="10" height="6" fill="#30304a"/><path d="M7 11.5H9M10 11.5H12M13 11.5H15M7 13.5H9M10 13.5H12M13 13.5H15" stroke="#fff" stroke-width="1"/><rect x="6" y="9" width="10" height="1.2" fill="#2060d0"/></svg><svg class="a" style="left:1053px;top:60px" width="16" height="16" viewBox="0 0 16 16"><rect x="0.5" y="0" width="15.5" height="7.5" fill="#a4a4bc"/><path d="M2 1.5V6M2 1.5H3.5L5 3V4.5L3.5 6H2M6.5 4.2H9.5V3.2L9 2.5H7.2L6.5 3.2V5.3L7.2 6H9.5M10.8 2.3L12.8 6L14.8 2.3" stroke="#fff" stroke-width="1.1" fill="none"/><path d="M0.5 9.5H16M4 9.5V11M12 9.5V11" stroke="#a4a4bc"/><rect x="0.5" y="11" width="7" height="5" fill="#a4a4bc"/><rect x="9" y="11" width="7" height="5" fill="#a4a4bc"/><path d="M4 12V16M12.5 12V16" stroke="#f0f0f6" stroke-width="0.6"/></svg><div class="tb" style="left:0px;top:81px;width:300px"></div><div class="a" style="left:0px;top:85px;width:2px;height:2px;background:#3c3c78;box-shadow:1px 1px 0 #fff"></div><div class="a" style="left:0px;top:88px;width:2px;height:2px;background:#3c3c78;box-shadow:1px 1px 0 #fff"></div><div class="a" style="left:0px;top:91px;width:2px;height:2px;background:#3c3c78;box-shadow:1px 1px 0 #fff"></div><div class="a" style="left:0px;top:94px;width:2px;height:2px;background:#3c3c78;box-shadow:1px 1px 0 #fff"></div><div class="a" style="left:0px;top:97px;width:2px;height:2px;background:#3c3c78;box-shadow:1px 1px 0 #fff"></div><svg class="a" style="left:7px;top:86px" width="16" height="16" viewBox="0 0 16 16"><path d="M1 5H8M12 5H16" stroke="#8a8aaa" stroke-width="2.2"/><rect x="7" y="1" width="2.5" height="9" fill="#8a8aaa"/><rect x="10.5" y="1" width="2.5" height="9" fill="#8a8aaa"/><rect x="1" y="10" width="5" height="6" fill="#8a8aaa"/></svg><svg class="a" style="left:29px;top:86px" width="16" height="16" viewBox="0 0 16 16"><path d="M1 5H8M12 5H16" stroke="#8a8aaa" stroke-width="2.2"/><rect x="7" y="1" width="2.5" height="9" fill="#8a8aaa"/><rect x="10.5" y="1" width="2.5" height="9" fill="#8a8aaa"/><rect x="1" y="10" width="2" height="6" fill="#8a8aaa"/><rect x="4" y="10" width="2" height="6" fill="#8a8aaa"/></svg><svg class="a" style="left:51px;top:86px" width="16" height="16" viewBox="0 0 16 16"><circle cx="2.5" cy="2.5" r="2" fill="#8a8aaa"/><path d="M6 3H16" stroke="#8a8aaa" stroke-width="2.5"/><path d="M1 8L7 11.5L1 15Z" fill="#8a8aaa"/></svg><svg class="a" style="left:73px;top:86px" width="16" height="16" viewBox="0 0 16 16"><path d="M1 5H8M12 5H16" stroke="#8a8aaa" stroke-width="2.2"/><rect x="7" y="1" width="2.5" height="9" fill="#8a8aaa"/><rect x="10.5" y="1" width="2.5" height="9" fill="#8a8aaa"/><path d="M1 9L7 12.5L1 16Z" fill="#8a8aaa"/></svg><svg class="a" style="left:95px;top:86px" width="16" height="16" viewBox="0 0 16 16"><rect x="0.5" y="1.5" width="15" height="13" fill="#f4f4f8" stroke="#8a8aaa"/><rect x="1" y="2" width="14" height="2.5" fill="#8a8aaa"/><path d="M3 7L5 9L7 6M3 11L5 13L7 10M9 8H14M9 12H14" stroke="#8a8aaa" fill="none" stroke-width="1.2"/></svg><div class="a" style="left:116px;top:86px;width:1px;height:17px;background:#7c7ca0;box-shadow:1px 0 0 #fff"></div><svg class="a" style="left:123px;top:86px" width="16" height="16" viewBox="0 0 16 16"><path d="M3 13L10 6" stroke="#9898b6" stroke-width="2.5"/><path d="M9 2A3.5 3.5 0 1 0 14 7" stroke="#9898b6" stroke-width="2" fill="none"/><path d="M10 11L15 16M15 11L10 16" stroke="#9898b6" stroke-width="1.6"/><circle cx="2.5" cy="2.5" r="2" fill="#9898b6"/></svg><svg class="a" style="left:145px;top:86px" width="16" height="16" viewBox="0 0 16 16"><path d="M3 13L10 6" stroke="#9898b6" stroke-width="2.5"/><path d="M9 2A3.5 3.5 0 1 0 14 7" stroke="#9898b6" stroke-width="2" fill="none"/><path d="M10 11L15 16M15 11L10 16" stroke="#9898b6" stroke-width="1.6"/><path d="M2.5 0.5L4.5 2.5L2.5 4.5L0.5 2.5Z" stroke="#9898b6" fill="none"/></svg><svg class="a" style="left:167px;top:86px" width="16" height="16" viewBox="0 0 16 16"><path d="M2.5 0V6M0.5 4L2.5 6L4.5 4M2.5 7V13M0.5 11L2.5 13L4.5 11" stroke="#9898b6" fill="none"/><path d="M6 8H16M6 15H16M8 9L14 14M14 9L8 14" stroke="#9898b6" stroke-width="1.6"/></svg><svg class="a" style="left:189px;top:86px" width="16" height="16" viewBox="0 0 16 16"><path d="M2.5 0V9M0.5 7L2.5 9L4.5 7" stroke="#9898b6" fill="none"/><rect x="6" y="1" width="10" height="10" fill="#9898b6"/><path d="M6 4H16M6 7H16M9.5 1V11M13 1V11" stroke="#f0f0f6" stroke-width="0.8"/><rect x="6" y="13" width="10" height="2" fill="#9898b6"/></svg><div class="a" style="left:211px;top:86px;width:1px;height:17px;background:#7c7ca0;box-shadow:1px 0 0 #fff"></div><svg class="a" style="left:217px;top:86px" width="16" height="16" viewBox="0 0 16 16"><rect x="0.5" y="0" width="15.5" height="7.5" fill="#a4a4bc"/><path d="M2 1.5V6M2 1.5H3.5L5 3V4.5L3.5 6H2M6.5 4.2H9.5V3.2L9 2.5H7.2L6.5 3.2V5.3L7.2 6H9.5M10.8 2.3L12.8 6L14.8 2.3" stroke="#fff" stroke-width="1.1" fill="none"/><path d="M3 8V15M1 13L3 15L5 13" stroke="#a4a4bc" fill="none"/><path d="M9 9L15 15M15 9L9 15" stroke="#a4a4bc" stroke-width="1.6"/></svg><svg class="a" style="left:239px;top:86px" width="16" height="16" viewBox="0 0 16 16"><rect x="0.5" y="0" width="15.5" height="7.5" fill="#a4a4bc"/><path d="M2 1.5V6M2 1.5H3.5L5 3V4.5L3.5 6H2M6.5 4.2H9.5V3.2L9 2.5H7.2L6.5 3.2V5.3L7.2 6H9.5M10.8 2.3L12.8 6L14.8 2.3" stroke="#fff" stroke-width="1.1" fill="none"/><path d="M3 8V15M1 13L3 15L5 13" stroke="#a4a4bc" fill="none"/><rect x="7" y="9" width="9" height="6" fill="#a4a4bc"/><path d="M8 12H15M10 9V15M13 9V15" stroke="#f0f0f6" stroke-width="0.8"/></svg><div class="a" style="left:261px;top:86px;width:1px;height:17px;background:#7c7ca0;box-shadow:1px 0 0 #fff"></div><svg class="a" style="left:267px;top:86px" width="16" height="16" viewBox="0 0 16 16"><path d="M3 13L10 6" stroke="#9898b6" stroke-width="2.5"/><path d="M9 2A3.5 3.5 0 1 0 14 7" stroke="#9898b6" stroke-width="2" fill="none"/><path d="M10 11L15 16M15 11L10 16" stroke="#9898b6" stroke-width="1.6"/><rect x="0" y="0" width="5" height="5" fill="#9898b6"/></svg>
<div id="nav" class="a">
  <div class="a" style="left:0;top:1px;width:262px;height:28px;background:linear-gradient(#f6f6fa 0%,#eeeef4 40%,#c8c8d9 80%,#a8a8c0 100%);border-bottom:1px solid #767694"></div>
  <div class="a" style="left:0px;top:9px;width:2px;height:2px;background:#3c3c78;box-shadow:1px 1px 0 #fff"></div><div class="a" style="left:0px;top:13px;width:2px;height:2px;background:#3c3c78;box-shadow:1px 1px 0 #fff"></div><div class="a" style="left:0px;top:17px;width:2px;height:2px;background:#3c3c78;box-shadow:1px 1px 0 #fff"></div><div class="a" style="left:0px;top:21px;width:2px;height:2px;background:#3c3c78;box-shadow:1px 1px 0 #fff"></div><div class="a" style="left:0px;top:25px;width:2px;height:2px;background:#3c3c78;box-shadow:1px 1px 0 #fff"></div>
  <div class="a tx" style="left:9px;top:6px;font-size:13px">导航</div>
  
  
  <div class="a" style="left:0;top:29px;width:262px;height:24px;background:linear-gradient(#a8a8c0 0%,#8e8eaa 55%,#70708f 100%)"></div>
  <div class="a" style="left:-3px;top:33px;color:#fff;font-size:11.5px;font-weight:bold;letter-spacing:-0.5px">连接目标</div>
  <div class="a" style="left:0;top:53px;width:262px;height:26px;background:linear-gradient(#f6f6fa 0%,#e8e8f0 45%,#bcbcd0 85%,#a4a4bc 100%);border-bottom:1px solid #767694"></div>
  <div class="a" style="left:0;top:79px;width:262px;height:21px;background:linear-gradient(#f2f2f6 0%,#dedee8 100%);border-bottom:1px solid #9898b0"></div>
  <div class="a tx" style="left:2px;top:81px;font-size:13px">当前连接目标</div>
  <div class="a" style="left:0;top:150px;width:262px;height:20px;background:linear-gradient(#f2f2f6 0%,#dedee8 100%);border-top:1px solid #d4d4de;border-bottom:1px solid #9898b0"></div>
  <div class="a tx" style="left:2px;top:152px;font-size:13px">所有连接目标</div>
  <div class="a" style="left:35px;top:102px;font-size:13px">Connection1</div>
  <div class="a" style="left:33px;top:171px;width:76px;height:19px;background:#ececec"></div>
  <div class="a" style="left:35px;top:173px;font-size:13px">Connection1</div>
  <div class="a" style="left:0;top:431px;width:262px;height:7px;background:linear-gradient(#9a9ab4,#8a8aa6)"></div>
  <div class="a" style="left:110px;top:433px;width:35px;height:3px;background:repeating-linear-gradient(90deg,#fff 0 2px,#55557a 2px 4px)"></div>
  <div class="a btn" style="top:438px"></div>
  <div class="a btn" style="top:469px"></div>
  <div class="a btn sel" style="top:501px;height:33px"></div>
  <div class="a btn" style="top:534px;height:33px"></div>
  <div class="a bt" style="left:29px;top:444px">工程</div>
  <div class="a bt" style="left:29px;top:477px">用户库</div>
  <div class="a bt" style="left:29px;top:509px">连接目标</div>
  <svg class="a" style="left:246px;top:544px" width="9" height="7"><path d="M0.8 0.8L3.5 3.5L0.8 6.2M4.5 0.8L7.2 3.5L4.5 6.2" stroke="#000" stroke-width="1.4" fill="none"/></svg>
  <div class="a" style="left:247px;top:553px;width:0;height:0;border-left:3px solid transparent;border-right:3px solid transparent;border-top:3px solid #000"></div>
</div>
<div id="editor" class="a">
  <div class="a" style="left:0;top:0;width:805px;height:27px;background:linear-gradient(#eeeef4,#f6f6fa)"></div>
  <div class="a" style="left:0;top:26px;width:805px;height:541px;border:1px solid #3a64a8;border-right:none;background:#fbc173"></div>
  <div class="a" style="left:2px;top:28px;width:803px;height:536px;background:#fff;border-left:2px solid #6a6a6a;border-top:2px solid #6a6a6a;border-bottom:1px solid #e2e2e2;box-shadow:0 1px 0 #fff"></div>
</div>
<svg class="a" style="left:260px;top:115px" width="40" height="22"><path d="M6.5 18.5L22 5.5H40V18.5Z" fill="#fbc77c"/><path d="M6 18.5L21.5 5.5H40" stroke="#4a6aa8" fill="none"/></svg><div class="a" style="left:0;top:0;width:1071px;height:831px;overflow:hidden;clip-path:inset(136px 0 162px 270px)"><svg class="a" style="left:0;top:0" width="1071" height="831" font-family="Liberation Sans, sans-serif"><line x1="332.5" y1="135" x2="332.5" y2="672" stroke="#000" stroke-width="1"/><line x1="1058.5" y1="135" x2="1058.5" y2="672" stroke="#000" stroke-width="1.3"/><line x1="332" y1="160.5" x2="929" y2="160.5" stroke="#000" stroke-width="1"/><path d="M932 153H929.5V167.5H932" stroke="#000" fill="none"/><path d="M1052 153H1054.5V167.5H1052M1054.5 160.5H1058" stroke="#000" fill="none"/><text x="934" y="163.5" font-size="10" fill="#000" text-anchor="start">ALT</text><text x="992" y="163.5" font-size="9.6" fill="#000" text-anchor="start">Y001</text><text x="992" y="179" font-size="11" fill="#0000ff" text-anchor="start">O...</text><line x1="332" y1="360.5" x2="929" y2="360.5" stroke="#000" stroke-width="1"/><path d="M932 353H929.5V367.5H932" stroke="#000" fill="none"/><path d="M1052 353H1054.5V367.5H1052M1054.5 360.5H1058" stroke="#000" fill="none"/><text x="934" y="363.5" font-size="10" fill="#000" text-anchor="start">ALT</text><text x="992" y="363.5" font-size="9.6" fill="#000" text-anchor="start">Y002</text><text x="992" y="379" font-size="11" fill="#0000ff" text-anchor="start">O...</text><line x1="332" y1="562.5" x2="929" y2="562.5" stroke="#000" stroke-width="1"/><path d="M932 555H929.5V569.5H932" stroke="#000" fill="none"/><path d="M1052 555H1054.5V569.5H1052M1054.5 562.5H1058" stroke="#000" fill="none"/><text x="934" y="563.5" font-size="10" fill="#000" text-anchor="start">ALT</text><text x="992" y="563.5" font-size="9.6" fill="#000" text-anchor="start">Y003</text><text x="992" y="579" font-size="11" fill="#0000ff" text-anchor="start">O...</text><line x1="332" y1="512.5" x2="569" y2="512.5" stroke="#000" stroke-width="1"/><line x1="569.5" y1="470" x2="569.5" y2="513" stroke="#000" stroke-width="1"/><rect x="356" y="505" width="9" height="15" fill="#fff"/><path d="M356.5 504.0V519.0M365.5 504.0V519.0" stroke="#000" fill="none"/><path d="M361.5 519.0V506.0M359.5 509.0L361.5 505.5L363.5 509.0" stroke="#000" fill="none"/><text x="360" y="499" font-size="11" fill="#000" text-anchor="middle">M4</text><rect x="416" y="505" width="9" height="15" fill="#fff"/><path d="M416.5 504.0V519.0M424.5 504.0V519.0" stroke="#000" fill="none"/><text x="420" y="499" font-size="11" fill="#000" text-anchor="middle">Y001</text><rect x="476" y="505" width="9" height="15" fill="#fff"/><path d="M476.5 504.0V519.0M484.5 504.0V519.0" stroke="#000" fill="none"/><text x="480" y="499" font-size="11" fill="#000" text-anchor="middle">Y002</text><rect x="535" y="505" width="9" height="15" fill="#fff"/><path d="M535.5 504.0V519.0M543.5 504.0V519.0" stroke="#000" fill="none"/><text x="539" y="499" font-size="11" fill="#000" text-anchor="middle">Y003</text><rect x="356" y="555" width="9" height="15" fill="#fff"/><path d="M356.5 554.0V569.0M365.5 554.0V569.0" stroke="#000" fill="none"/><path d="M361.5 569.0V556.0M359.5 559.0L361.5 555.5L363.5 559.0" stroke="#000" fill="none"/><text x="360" y="549" font-size="11" fill="#000" text-anchor="middle">M3</text><text x="326" y="566" font-size="11" fill="#000" text-anchor="end">46</text><line x1="569.5" y1="562" x2="569.5" y2="663" stroke="#000" stroke-width="1"/><line x1="332" y1="612.5" x2="569" y2="612.5" stroke="#000" stroke-width="1"/><rect x="356" y="605" width="9" height="15" fill="#fff"/><path d="M356.5 604.0V619.0M365.5 604.0V619.0" stroke="#000" fill="none"/><path d="M361.5 619.0V606.0M359.5 609.0L361.5 605.5L363.5 609.0" stroke="#000" fill="none"/><text x="360" y="599" font-size="11" fill="#000" text-anchor="middle">M1</text><rect x="416" y="605" width="9" height="15" fill="#fff"/><path d="M416.5 604.0V619.0M424.5 604.0V619.0" stroke="#000" fill="none"/><text x="420" y="599" font-size="11" fill="#000" text-anchor="middle">Y002</text><rect x="476" y="605" width="9" height="15" fill="#fff"/><path d="M476.5 604.0V619.0M484.5 604.0V619.0" stroke="#000" fill="none"/><text x="480" y="599" font-size="11" fill="#000" text-anchor="middle">Y003</text><rect x="535" y="605" width="9" height="15" fill="#fff"/><path d="M535.5 604.0V619.0M543.5 604.0V619.0" stroke="#000" fill="none"/><text x="539" y="599" font-size="11" fill="#000" text-anchor="middle">Y004</text><line x1="332" y1="662.5" x2="569" y2="662.5" stroke="#000" stroke-width="1"/><rect x="356" y="655" width="9" height="15" fill="#fff"/><path d="M356.5 654.0V669.0M365.5 654.0V669.0" stroke="#000" fill="none"/><path d="M361.5 669.0V656.0M359.5 659.0L361.5 655.5L363.5 659.0" stroke="#000" fill="none"/><text x="360" y="649" font-size="11" fill="#000" text-anchor="middle">M2</text><rect x="416" y="655" width="9" height="15" fill="#fff"/><path d="M416.5 654.0V669.0M424.5 654.0V669.0" stroke="#000" fill="none"/><text x="420" y="649" font-size="11" fill="#000" text-anchor="middle">Y001</text><rect x="476" y="655" width="9" height="15" fill="#fff"/><path d="M476.5 654.0V669.0M484.5 654.0V669.0" stroke="#000" fill="none"/><text x="480" y="649" font-size="11" fill="#000" text-anchor="middle">Y003</text><rect x="535" y="655" width="9" height="15" fill="#fff"/><path d="M535.5 654.0V669.0M543.5 654.0V669.0" stroke="#000" fill="none"/><text x="539" y="649" font-size="11" fill="#000" text-anchor="middle">Y004</text></svg></div>
<div id="watch" class="a"><div class="a" style="left:0;top:1px;width:1071px;height:29px;background:linear-gradient(#f8f8fc 0%,#e8e8f0 45%,#c4c4d6 78%,#9c9cb8 100%);border-bottom:1px solid #6e6e6e"></div><div class="a" style="left:0px;top:9px;width:2px;height:2px;background:#3c3c78;box-shadow:1px 1px 0 #fff"></div><div class="a" style="left:0px;top:13px;width:2px;height:2px;background:#3c3c78;box-shadow:1px 1px 0 #fff"></div><div class="a" style="left:0px;top:17px;width:2px;height:2px;background:#3c3c78;box-shadow:1px 1px 0 #fff"></div><div class="a" style="left:0px;top:21px;width:2px;height:2px;background:#3c3c78;box-shadow:1px 1px 0 #fff"></div><div class="a" style="left:0px;top:25px;width:2px;height:2px;background:#3c3c78;box-shadow:1px 1px 0 #fff"></div><div class="a tx" style="left:8px;top:6px;font-size:13px">监看1</div><div class="a" style="left:0;top:30px;width:1071px;height:16px;background:#efefef;border-top:1px solid #e6e6e6;border-bottom:1px solid #6e6e6e;box-shadow:0 1px 0 #e4e4e4"></div><div class="a" style="left:94px;top:31px;width:1px;height:14px;background:#7a7a7a"></div><div class="a" style="left:95px;top:31px;width:1px;height:14px;background:#fff"></div><div class="a" style="left:174px;top:31px;width:1px;height:14px;background:#7a7a7a"></div><div class="a" style="left:175px;top:31px;width:1px;height:14px;background:#fff"></div><div class="a" style="left:383px;top:31px;width:1px;height:14px;background:#7a7a7a"></div><div class="a" style="left:384px;top:31px;width:1px;height:14px;background:#fff"></div><div class="a" style="left:464px;top:31px;width:1px;height:14px;background:#7a7a7a"></div><div class="a" style="left:465px;top:31px;width:1px;height:14px;background:#fff"></div><div class="a" style="left:564px;top:31px;width:1px;height:14px;background:#7a7a7a"></div><div class="a" style="left:565px;top:31px;width:1px;height:14px;background:#fff"></div><div class="a" style="left:664px;top:31px;width:1px;height:14px;background:#7a7a7a"></div><div class="a" style="left:665px;top:31px;width:1px;height:14px;background:#fff"></div><div class="a" style="left:2px;top:30px;font-size:13px;line-height:16px;white-space:nowrap">软元件/标签</div><div class="a" style="left:101px;top:30px;font-size:13px;line-height:16px;white-space:nowrap">当前值</div><div class="a" style="left:181px;top:30px;font-size:13px;line-height:16px;white-space:nowrap">数据类型</div><div class="a" style="left:390px;top:30px;font-size:13px;line-height:16px;white-space:nowrap">类</div><div class="a" style="left:471px;top:30px;font-size:13px;line-height:16px;white-space:nowrap">软元件</div><div class="a" style="left:571px;top:30px;font-size:13px;line-height:16px;white-space:nowrap">注释</div><div class="a" style="left:0;top:64px;width:1071px;height:1px;background:#e6e6e6"></div><div class="a" style="left:0;top:81px;width:1071px;height:1px;background:#e6e6e6"></div><div class="a" style="left:0;top:98px;width:1071px;height:1px;background:#e6e6e6"></div><div class="a" style="left:0;top:115px;width:1071px;height:1px;background:#e6e6e6"></div><div class="a" style="left:0;top:132px;width:1071px;height:1px;background:#e6e6e6"></div><div class="a" style="left:0;top:149px;width:1071px;height:1px;background:#e6e6e6"></div><div class="a" style="left:0;top:166px;width:1071px;height:1px;background:#e6e6e6"></div><div class="a" style="left:96px;top:46px;width:1px;height:110px;background:#e6e6e6"></div><div class="a" style="left:176px;top:46px;width:1px;height:110px;background:#e6e6e6"></div><div class="a" style="left:385px;top:46px;width:1px;height:110px;background:#e6e6e6"></div><div class="a" style="left:466px;top:46px;width:1px;height:110px;background:#e6e6e6"></div><div class="a" style="left:566px;top:46px;width:1px;height:110px;background:#e6e6e6"></div><div class="a" style="left:666px;top:46px;width:1px;height:110px;background:#e6e6e6"></div><div class="a mono" style="left:24px;top:50px">Y1</div><div class="a mono" style="left:102px;top:50px">--</div><div class="a mono" style="left:181px;top:50px">Bit</div><div class="a mono" style="left:471px;top:50px">Y001</div><div class="a mono" style="left:24px;top:67px">Y2</div><div class="a mono" style="left:102px;top:67px">--</div><div class="a mono" style="left:181px;top:67px">Bit</div><div class="a mono" style="left:471px;top:67px">Y002</div><div class="a mono" style="left:24px;top:84px">Y3</div><div class="a mono" style="left:102px;top:84px">--</div><div class="a mono" style="left:181px;top:84px">Bit</div><div class="a mono" style="left:471px;top:84px">Y003</div><div class="a mono" style="left:24px;top:101px">Y4</div><div class="a mono" style="left:102px;top:101px">--</div><div class="a mono" style="left:181px;top:101px">Bit</div><div class="a mono" style="left:471px;top:101px">Y004</div></div>

<div id="menu" class="a"><div class="strip" style="top:1px;bottom:2px"></div><div class="a" style="left:1.5px;top:76px;width:205px;height:23px;background:#feeac2;border:1px solid #4a5a8a"></div><div class="a" style="left:4px;top:26px;width:20px;height:20px;background:#fcc078;border:1px solid #50608a"></div><svg class="a" style="left:8px;top:31px" width="12" height="10"><path d="M1.5 5L4.5 8L10 2" stroke="#000" stroke-width="1.6" fill="none"/></svg><div class="sep" style="left:36px;top:48px"></div><div class="sep" style="left:36px;top:74px"></div><div class="sep" style="left:36px;top:101px"></div><div class="sep" style="left:36px;top:195px"></div><div class="sep" style="left:36px;top:221px"></div><div class="sep" style="left:36px;top:293px"></div><div class="sep" style="left:36px;top:342px"></div><div class="sep" style="left:36px;top:368px"></div><div class="sep" style="left:36px;top:394px"></div><div class="sep" style="left:36px;top:420px"></div><div class="mi" style="left:36px;top:2.5px">工具栏(<u>T</u>)</div><div class="arr" style="left:196px;top:9.5px"></div><div class="mi" style="left:36px;top:25px">状态栏(<u>B</u>)</div><div class="mi" style="left:36px;top:51px">颜色及字体(<u>C</u>)...</div><div class="mi" style="left:36px;top:77px">折叠窗口(<u>K</u>)</div><div class="arr" style="left:196px;top:84px"></div><div class="mi" style="left:36px;top:102.5px">注释显示(<u>M</u>)</div><div class="mi" style="left:146px;top:102.5px">Ctrl+F5</div><div class="mi" style="left:36px;top:125.5px">声明显示(<u>S</u>)</div><div class="mi" style="left:146px;top:125.5px">Ctrl+F7</div><div class="mi" style="left:36px;top:148.5px">注解显示(<u>O</u>)</div><div class="mi" style="left:146px;top:148.5px">Ctrl+F8</div><div class="mi" style="left:36px;top:171.5px">当前值监视行显示(<u>W</u>)...</div><div class="mi" style="left:36px;top:197.5px">软元件注释显示格式(<u>Q</u>)...</div><div class="mi" style="left:36px;top:223.5px">梯形图块显示(<u>D</u>)</div><div class="arr" style="left:196px;top:230.5px"></div><div class="mi" style="left:36px;top:246.5px">软元件显示(<u>V</u>)</div><div class="arr" style="left:196px;top:253.5px"></div><div class="mi dis" style="left:36px;top:269.5px">编译结果显示(<u>A</u>)...</div><div class="mi" style="left:36px;top:295.5px">放大/缩小(<u>Z</u>)...</div><div class="mi" style="left:36px;top:318.5px">字符大小(<u>X</u>)</div><div class="arr" style="left:196px;top:325.5px"></div><div class="mi" style="left:36px;top:344.5px">打开其他窗口(<u>H</u>)</div><div class="arr" style="left:196px;top:351.5px"></div><div class="mi" style="left:36px;top:370.5px">移动SFC图的光标(<u>U</u>)</div><div class="arr" style="left:196px;top:377.5px"></div><div class="mi" style="left:36px;top:396.5px">打开指令帮助(<u>R</u>)...</div><div class="mi" style="left:146px;top:396.5px">Ctrl+F1</div><div class="mi dis" style="left:36px;top:422px">ST单色显示(<u>E</u>)</div><div class="mi dis" style="left:150px;top:422px">Ctrl+Q</div><svg class="a" style="left:6px;top:299px" width="16" height="16" viewBox="0 0 16 16"><circle cx="7" cy="7" r="6" stroke="#000090" stroke-width="1.6" fill="#fff"/><path d="M2.5 5H7.5M5 2.5V7.5M6.5 9.5H11" stroke="#000" stroke-width="2"/><path d="M11.5 11.5L15 15" stroke="#c02020" stroke-width="1.8"/></svg></div>
<div id="sub" class="a"><div class="strip" style="top:1px;bottom:2px"></div><div class="a" style="left:0px;top:151px;width:226px;height:23px;background:#feeac2;border:1px solid #4a5a8a"></div><div class="a" style="left:3px;top:152px;width:20px;height:21px;background:#f8783a;border:1px solid #50608a"></div><svg class="a" style="left:7px;top:157px" width="12" height="10"><path d="M1.5 5L4.5 8L10 2" stroke="#000" stroke-width="1.6" fill="none"/></svg><div class="a" style="left:3px;top:2px;width:20px;height:20px;background:#fcc078;border:1px solid #50608a"></div><div class="sep" style="left:35px;top:25px"></div><div class="sep" style="left:35px;top:51px"></div><div class="sep" style="left:35px;top:77px"></div><div class="sep" style="left:35px;top:149px"></div><div class="sep" style="left:35px;top:244px"></div><div class="sep" style="left:35px;top:293px"></div><div class="sep" style="left:35px;top:319px"></div><div class="sep" style="left:35px;top:345px"></div><div class="mi" style="left:35px;top:2px">导航(<u>N</u>)</div><div class="mi" style="left:35px;top:28.5px">部件选择(<u>E</u>)</div><div class="mi" style="left:35px;top:54px">输出(<u>O</u>)</div><div class="mi" style="left:35px;top:80px">交叉参照(<u>R</u>)</div><div class="mi" style="left:35px;top:103px">软元件使用列表(<u>L</u>)</div><div class="mi dis" style="left:35px;top:126px">软元件分配确认(<u>C</u>)</div><div class="mi" style="left:35px;top:151.5px">监看1(<u>1</u>)</div><div class="mi" style="left:35px;top:174.5px">监看2(<u>2</u>)</div><div class="mi" style="left:35px;top:197.5px">监看3(<u>3</u>)</div><div class="mi" style="left:35px;top:220.5px">监看4(<u>4</u>)</div><div class="mi" style="left:35px;top:246.5px">智能功能模块监视(<u>I</u>)</div><div class="arr" style="left:215px;top:253.5px"></div><div class="mi dis" style="left:35px;top:269.5px">智能功能模块向导(<u>G</u>)</div><div class="mi" style="left:35px;top:295.5px">搜索/替换(<u>F</u>)</div><div class="mi" style="left:35px;top:321.5px">调试(<u>D</u>)</div><div class="arr" style="left:215px;top:328.5px"></div><div class="mi" style="left:35px;top:347px">将窗口位置恢复为初始状态(<u>P</u>)</div></div>
<div class="a" style="left:283px;top:22px;width:54px;height:1px;background:#d4d4e0"></div><!-- ICONS --><svg class="a" style="left:229px;top:112px" width="10" height="13" viewBox="0 0 10 13"><path d="M2 1.5H8M3 1.5V7M7 1.5V7M1 7.5H9M5 8V12" stroke="#000" stroke-width="1.5" fill="none"/><rect x="3" y="2" width="2" height="5" fill="#000"/></svg><svg class="a" style="left:245px;top:115px" width="10" height="10" viewBox="0 0 10 10"><path d="M1 1L9 9M9 1L1 9" stroke="#000" stroke-width="1.8"/></svg><svg class="a" style="left:0px;top:163px" width="17" height="16" viewBox="0 0 17 16"><path d="M0.5 3.5H7.5L10.5 6.5V15.5H0.5Z" fill="#fff" stroke="#303030"/><path d="M11.5 0V9M7 4.5H16" stroke="#f07010" stroke-width="3"/><path d="M11.5 1V8M8 4.5H15" stroke="#ffa030" stroke-width="1.2"/></svg><svg class="a" style="left:22px;top:166px" width="16" height="15" viewBox="0 0 16 15"><path d="M0.5 0.5H6L8 2.5V10.5H0.5Z" fill="#e8f0ff" stroke="#4070c0"/><path d="M2 3H6M2 5H6M2 7H6" stroke="#4070c0"/><path d="M6.5 4.5H12L14.5 7V14.5H6.5Z" fill="#fff" stroke="#2050b0"/><path d="M8 8H13M8 10H13M8 12H13" stroke="#2050b0"/></svg><svg class="a" style="left:44px;top:165px" width="16" height="16" viewBox="0 0 16 16"><path d="M1.5 2.5H11.5V13.5H1.5Z" fill="#d8d8e4" stroke="#b0b0c4"/><rect x="4" y="1" width="5" height="3" fill="#c0c0d0"/><path d="M6.5 7.5H12L14.5 10V15.5H6.5Z" fill="#ececf2" stroke="#b0b0c4"/></svg><svg class="a" style="left:67px;top:164px" width="16" height="16" viewBox="0 0 16 16"><path d="M0.5 0.5H6L8.5 3V11.5H0.5Z" fill="#fff" stroke="#303030"/><path d="M2 4H6M2 6H6" stroke="#303030"/><circle cx="11" cy="11" r="4.8" fill="#1868c8"/><rect x="10" y="9.5" width="2" height="5" fill="#fff"/><rect x="10" y="7" width="2" height="1.6" fill="#fff"/></svg><svg class="a" style="left:89px;top:165px" width="14" height="16" viewBox="0 0 14 16"><path d="M0.5 0.5H9L12.5 4V15.5H0.5Z" fill="#eaf0ff" stroke="#4070c0"/><path d="M3 7A3.5 3.5 0 0 1 9.5 6M10 9A3.5 3.5 0 0 1 3.5 10" stroke="#20a030" stroke-width="2" fill="none"/><path d="M8 3.5L11 6.5L8 7.5ZM5 12.5L2 9.5L5 8.5Z" fill="#20a030"/></svg><svg class="a" style="left:14px;top:207px" width="16" height="17" viewBox="0 0 16 17"><path d="M0.5 4.5H8.5V13.5H0.5Z" fill="#fff" stroke="#109010"/><path d="M2.5 6.5H10.5V16.5H2.5Z" fill="#e8f8e8" stroke="#109010"/><rect x="5" y="3" width="7" height="6" fill="#707070"/><rect x="6" y="4" width="4" height="3" fill="#d0d0d0"/><rect x="4" y="9" width="12" height="8" fill="#282828"/><path d="M5 11.5H15M5 14H15" stroke="#909090" stroke-width="0.8"/><circle cx="12.5" cy="4" r="3.8" fill="#e02020"/><path d="M10.5 4L12 5.5L14.5 2.5" stroke="#fff" stroke-width="1.2" fill="none"/></svg><svg class="a" style="left:14px;top:278px" width="16" height="17" viewBox="0 0 16 17"><path d="M0.5 4.5H8.5V13.5H0.5Z" fill="#fff" stroke="#109010"/><path d="M2.5 6.5H10.5V16.5H2.5Z" fill="#e8f8e8" stroke="#109010"/><rect x="5" y="3" width="7" height="6" fill="#707070"/><rect x="6" y="4" width="4" height="3" fill="#d0d0d0"/><rect x="4" y="9" width="12" height="8" fill="#282828"/><path d="M5 11.5H15M5 14H15" stroke="#909090" stroke-width="0.8"/><circle cx="12.5" cy="4" r="3.8" fill="#e02020"/><path d="M10.5 4L12 5.5L14.5 2.5" stroke="#fff" stroke-width="1.2" fill="none"/></svg><svg class="a" style="left:0px;top:547px" width="25" height="26" viewBox="0 0 25 26"><path d="M7 2H20V15H7Z" fill="#505050"/><path d="M8.5 3.5H18.5V13.5H8.5Z" fill="#808080"/><path d="M0 17L7 15H19L12 18Z" fill="#909090"/><rect x="10" y="9" width="6" height="17" fill="#e83020"/><rect x="10" y="8" width="5" height="2" fill="#303030"/><rect x="15" y="9" width="9" height="17" fill="#282828"/><path d="M17 12H22M17 15H22M17 18H22M17 21H22" stroke="#c0c0c0"/><rect x="17" y="11" width="2" height="3" fill="#40c040"/></svg><svg class="a" style="left:0px;top:579px" width="25" height="27" viewBox="0 0 25 27"><path d="M0 3Q5 1 11 3Q17 1 22 3V17Q17 15 11 17Q5 15 0 17Z" fill="#f4eede" stroke="#705840" stroke-width="1"/><path d="M11 3V17" stroke="#a08870"/><path d="M2 6H9M2 9H9M2 12H9M13 6H20M13 9H20" stroke="#c8bca8" stroke-width="0.8"/><path d="M0 17L11 19L22 17" stroke="#5a4020" stroke-width="1.5" fill="none"/><path d="M15 8L20 14V20H14L12 16L14 14Z" fill="#f0c840" stroke="#a08020" stroke-width="0.8"/><rect x="14" y="21" width="9" height="4" fill="#60b060"/></svg><svg class="a" style="left:0px;top:611px" width="25" height="27" viewBox="0 0 25 27"><path d="M1.5 8.5V22.5H13" fill="none" stroke="#20a020" stroke-width="1.5"/><path d="M5 1H19V14H5Z" fill="#303848"/><path d="M6 2H18V13H6Z" fill="#40c8f8"/><path d="M0 18L5 14H18L14 19Z" fill="#8890a0"/><rect x="14" y="6" width="10" height="20" fill="#282828"/><path d="M16 9H22M16 12H22M16 15H22M16 19H22M16 22H22" stroke="#a0a0a0"/><rect x="16" y="8" width="2" height="6" fill="#40c040"/></svg><svg class="a" style="left:498px;top:104px" width="16" height="16" viewBox="0 0 16 16"><rect x="1" y="2" width="14" height="13" fill="#f2f2f2"/><path d="M3.5 6V13.5H9M3.5 9.5H9" stroke="#8a8a8a" stroke-width="1.4" fill="none"/><path d="M0.5 1.5H3L4 2.5H7.5V6.5H0.5Z" fill="#f8c030" stroke="#c08010" stroke-width="0.7"/><path d="M8.5 6.5H11L12 7.5H15.5V11H8.5Z" fill="#f8c030" stroke="#c08010" stroke-width="0.7"/><path d="M8.5 11.5H11L12 12.5H15.5V15.5H8.5Z" fill="#f8c030" stroke="#c08010" stroke-width="0.7"/></svg><svg class="a" style="left:498px;top:131px" width="16" height="16" viewBox="0 0 16 16"><path d="M0 4.5H4M0 8H4M0 11.5H4M12 4.5H16M12 8H16M12 11.5H16" stroke="#000" stroke-width="2"/><rect x="3.5" y="2.5" width="9" height="11" fill="#b8b8b8" stroke="#000" stroke-width="1.5"/><rect x="5" y="4" width="6" height="3" fill="#d8d8d8"/></svg><svg class="a" style="left:498px;top:157px" width="16" height="16" viewBox="0 0 16 16"><rect x="1.5" y="1.5" width="14" height="13" fill="#fff" stroke="#203060"/><rect x="2" y="2" width="13" height="3" fill="#1868d0"/><path d="M3 7.5H14M3 10H14M3 12.5H14" stroke="#4070b0"/></svg><svg class="a" style="left:498px;top:183px" width="16" height="16" viewBox="0 0 16 16"><rect x="0.5" y="0" width="15.5" height="7.5" fill="#1060d8"/><path d="M2 1.5V6M2 1.5H3.5L5 3V4.5L3.5 6H2M6.5 4.2H9.5V3.2L9 2.5H7.2L6.5 3.2V5.3L7.2 6H9.5M10.8 2.3L12.8 6L14.8 2.3" stroke="#fff" stroke-width="1.1" fill="none"/><rect x="0.5" y="9" width="8" height="6" fill="#1a5ff0"/><path d="M5 12L8 10V14Z" fill="#fff"/><path d="M8 9H11V16H7.5ZM13 9H15.5L16 16H12.5Z" fill="#111"/><rect x="10" y="11" width="3.5" height="3" fill="#111"/></svg><svg class="a" style="left:498px;top:206px" width="16" height="16" viewBox="0 0 16 16"><rect x="0.5" y="0" width="15.5" height="7.5" fill="#1060d8"/><path d="M2 1.5V6M2 1.5H3.5L5 3V4.5L3.5 6H2M6.5 4.2H9.5V3.2L9 2.5H7.2L6.5 3.2V5.3L7.2 6H9.5M10.8 2.3L12.8 6L14.8 2.3" stroke="#fff" stroke-width="1.1" fill="none"/><rect x="6" y="9" width="10" height="6" fill="#30304a"/><path d="M7 11.5H9M10 11.5H12M13 11.5H15M7 13.5H9M10 13.5H12M13 13.5H15" stroke="#fff" stroke-width="1"/><rect x="6" y="9" width="10" height="1.2" fill="#2060d0"/></svg><svg class="a" style="left:498px;top:229px" width="16" height="16" viewBox="0 0 16 16"><rect x="0.5" y="0" width="15.5" height="7.5" fill="#a4a4bc"/><path d="M2 1.5V6M2 1.5H3.5L5 3V4.5L3.5 6H2M6.5 4.2H9.5V3.2L9 2.5H7.2L6.5 3.2V5.3L7.2 6H9.5M10.8 2.3L12.8 6L14.8 2.3" stroke="#fff" stroke-width="1.1" fill="none"/><path d="M0.5 9.5H16M4 9.5V11M12 9.5V11" stroke="#a4a4bc"/><rect x="0.5" y="11" width="7" height="5" fill="#a4a4bc"/><rect x="9" y="11" width="7" height="5" fill="#a4a4bc"/><path d="M4 12V16M12.5 12V16" stroke="#f0f0f6" stroke-width="0.6"/></svg><svg class="a" style="left:497px;top:372px" width="18" height="18" viewBox="0 0 18 18"><path d="M9 1.5A7 6.5 0 1 1 5 13L2 16L3.5 12A7 6.5 0 0 1 9 1.5Z" fill="#f0f0f6" stroke="#b8b8cc"/><text x="9" y="12" font-size="9" font-weight="bold" text-anchor="middle" fill="#b0b0c4" font-family="Liberation Sans,sans-serif">?</text></svg><svg class="a" style="left:497px;top:399px" width="17" height="16" viewBox="0 0 17 16"><path d="M2 4H6V2H7V15H0V7Z" fill="#202020"/><path d="M15 4H11V2H10V15H17V7Z" fill="#202020"/><rect x="6" y="6" width="5" height="4" fill="#404040"/><path d="M2 8H5M12 8H15" stroke="#a0a0a0"/></svg><svg class="a" style="left:585px;top:265px" width="14" height="22" viewBox="0 0 14 22"><path d="M1 1V17L5 13.5L8 20.5L10.5 19.5L7.5 12.5H12.5Z" fill="#fff" stroke="#000" stroke-width="1" stroke-linejoin="round"/></svg><!-- /ICONS -->
</body></html>
